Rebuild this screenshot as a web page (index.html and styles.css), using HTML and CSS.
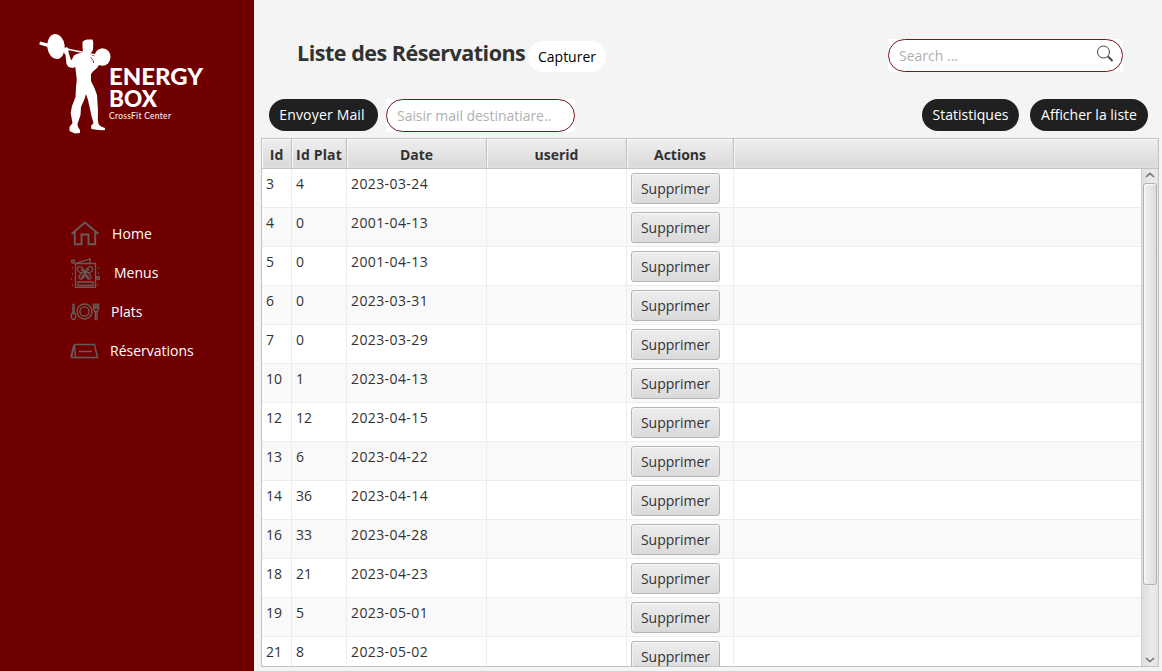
FILE: index.html
```html
<!DOCTYPE html>
<html lang="fr">
<head>
<meta charset="utf-8">
<title>Liste des Réservations</title>
<link rel="stylesheet" href="styles.css">
</head>
<body>
<aside class="sidebar">
  <svg class="logo" viewBox="30 25 190 115" width="190" height="115">
    <g fill="#fff">
      <ellipse cx="56" cy="46.500" rx="8.700" ry="12.500" transform="rotate(-6 56 46.500)"/>
      <ellipse cx="102.500" cy="57" rx="8" ry="8.800"/>
      <path d="M40 41.500L50 44L49.500 47.500L39.300 44.500Z"/>
      <path d="M62 48L98 55.500" stroke="#fff" stroke-width="1.600"/>
      <path d="M82.500 42Q84 39.500 88 39.500L92.500 39.500L93.300 42.500L93 49.500Q92 53 89.500 53.500L92 55.500L95 56L98.500 61L99 65L97 68L93.500 71L91 74L91 81L94.500 88L97 95L97.500 103L98 110L97.800 119L98.500 124L101 126.500L105 128V130Q98 130.500 91.500 129L91 126L93.500 123L91.500 116L90 109L88 100L86 94L84.500 99L81 107L80.500 115L77.500 124L78 127L80 130V133L75 133.500L69.500 131L69.500 127L72.500 123L70.700 113L72 106L75.500 97L76 87L76.800 80L75.300 67L72.500 68L68.500 67L66.500 64L65.500 55L63.500 52L63.500 48.500L67 47L68.500 49L68.500 52L70 57L71 60L74.500 55L78 53.500L83 52.500L82.500 47Z"/>
    </g>
    <path d="M71 60L73 57M90.500 57L93.500 61L93.500 63" stroke="#700000" stroke-width=".7" fill="none"/>
    <g class="logo-text">
      <text x="109" y="85" textLength="94" lengthAdjust="spacingAndGlyphs" class="logo-name">ENERGY</text>
      <text x="109" y="106.500" textLength="48" lengthAdjust="spacingAndGlyphs" class="logo-name">BOX</text>
      <text x="109" y="119" textLength="62" class="logo-sub">CrossFit Center</text>
    </g>
  </svg>
  <nav class="menu">
    <a class="item home"><svg width="30" height="30" viewBox="0 0 30 30"><path d="M1.500 15L15 3.500L28.500 15M4.800 13V25.300H11.500V15.500H18.500V25.300H25.200V13" stroke-width="1.900"/></svg><span>Home</span></a>
    <a class="item menus"><svg width="30" height="30" viewBox="0 0 30 30"><path d="M5.500 5.500H25.500V29.500H5.500ZM7 5L20 1V5M8 24H23V27.500H8Z M8 9Q12 7 15 14Q18 7 22 9Q24 14 18 15Q23 19 20 21Q17 22 15 16Q13 22 10 21Q7 19 12 15Q6 14 8 9M11 11L19 20M19 11L11 20" stroke-width="1.300"/><circle cx="3" cy="3.500" r="1.500"/><circle cx="28" cy="20" r="1.500"/><path d="M2 10h1M2 16h1M1 21h1M2 27h1M28 10h1M28 15h1M27 27h1"/></svg><span>Menus</span></a>
    <a class="item plats"><svg width="30" height="30" viewBox="0 0 30 30"><circle cx="14.500" cy="14.500" r="7.500"/><circle cx="14.500" cy="14.500" r="4.600"/><path d="M4 6.500V16M3 7V16M3.500 15.500Q1.200 16.500 1.200 19.500Q1.500 22.500 3.500 22.500Q5.700 22.500 5.700 19.500Q5.700 16.500 3.500 15.500M23.500 6.500V12.500Q24 14.500 26 14.500Q28.500 14.500 28.500 11.500V6.500M25.200 6.500V12M27 6.500V12M25.300 14.500V22.500H27V14.500"/></svg><span>Plats</span></a>
    <a class="item reserv"><svg width="30" height="30" viewBox="0 0 30 30"><path d="M4.500 8.500H24.500L27.500 21.500H1.500L4.500 8.500L5.500 21.500M1.500 21.500L1 20L4 9"/><path d="M9 15.500H22" stroke-width="1.500"/></svg><span>Réservations</span></a>
  </nav>
</aside>
<main class="content">
  <header class="title-row">
    <h1>Liste des Réservations</h1>
    <button class="pill light">Capturer</button>
    <div class="field-box search"><div class="field"><span>Search ...</span>
      <svg width="18" height="18" viewBox="0 0 18 18"><circle cx="7.500" cy="7" r="6"/><path d="M12 11.500L16.500 16" stroke-width="2"/></svg></div></div>
  </header>
  <div class="tools">
    <button class="pill dark send">Envoyer Mail</button>
    <div class="field-box mail"><div class="field"><span>Saisir mail destinatiare..</span></div></div>
    <button class="pill dark stats">Statistiques</button>
    <button class="pill dark list">Afficher la liste</button>
  </div>
  <section class="table">
    <div class="row head"><div>Id</div><div class="th-plat">Id Plat</div><div>Date</div><div>userid</div><div>Actions</div><div></div></div>
    <div class="body">
      <div class="rows" id="rows"></div>
      <div class="scrollbar">
        <svg width="10" height="6" viewBox="0 0 10 6"><path d="M1 5L5 1.300L9 5"/></svg>
        <div class="thumb"></div>
        <svg width="10" height="6" viewBox="0 0 10 6"><path d="M1 1L5 4.700L9 1"/></svg>
      </div>
    </div>
  </section>
</main>
<script src="script.js"></script>
</body>
</html>
```
FILE: styles.css
```css
* { box-sizing: border-box; }
body {
  margin: 0;
  width: 1162px;
  height: 671px;
  overflow: hidden;
  display: flex;
  background: #f4f4f4;
  font: 14px/20px "Open Sans", "Noto Sans", sans-serif;
  color: #323232;
}
.sidebar { width: 254px; height: 671px; background: #700000; flex: none; }
.logo { display: block; margin: 25px 0 0 30px; }
.logo-text { fill: #fff; font-family: Lato, sans-serif; }
.logo-name { font-size: 22px; font-weight: 900; line-height: 20px; }
.logo-sub { font-size: 8.5px; }
.menu { padding: 74px 0 0 70px; }
.item { display: flex; align-items: center; height: 39px; color: #fff; }
.item svg { fill: none; stroke: #665c5a; stroke-width: 1.4; flex: none; }
.home span { margin-left: 12px; letter-spacing: .1px; }
.menus span { margin-left: 14px; }
.plats span { margin-left: 11px; }
.reserv span { margin-left: 10px; }
.content { width: 908px; padding-left: 7px; }
.title-row { display: flex; height: 72px; padding: 39px 0 0 36px; }
h1 { margin: -1px 0 0; width: 231px; font-size: 21.5px; line-height: 29px; font-weight: 700; white-space: nowrap; letter-spacing: -.48px; }
.pill { border: 0; border-radius: 16px; height: 32px; padding: 0; font: inherit; white-space: nowrap; text-align: center; }
.light { width: 78px; height: 31px; margin-top: 2px; background: #fff; color: #000; }
.dark { background: #212020; color: #fff; }
.field-box { background: #fff; border-radius: 3px; height: 33px; }
.field { display: flex; align-items: center; justify-content: space-between; height: 33px; border: 1px solid #7c1519; border-radius: 17px; background: #fff; padding: 0 8px 0 10px; color: #b0b0b0; white-space: nowrap; }
.field svg { fill: none; stroke: #444; stroke-width: 1; margin-top: -4px; }
.search { width: 235px; margin-left: 282px; }
.tools { display: flex; padding: 27px 0 0 8px; height: 66px; }
.send { width: 109px; padding-right: 3px; letter-spacing: .18px; }
.mail { width: 189px; margin-left: 8px; }
.mail span { letter-spacing: -.04px; }
.stats { width: 97px; margin-left: 347px; }
.list { width: 118px; margin-left: 11px; }
.table { width: 898px; height: 529px; border: 1px solid #c3c3c3; background: #fff; overflow: hidden; }
.row { display: grid; grid-template-columns: 30px 55px 140px 140px 107px 1fr; }
.head { height: 30px; font-weight: 700; text-align: center; line-height: 29px; }
.head div { height: 30px; padding-top: 1px; border-right: 1px solid #c3c3c3; border-bottom: 1px solid #c3c3c3; background: linear-gradient(#efefef, #d9d9d9); box-shadow: inset 1px 1px #f7f7f7, inset -1px -1px #e0e0e0; white-space: nowrap; }
.head div:last-child { border-right: 0; }
.head .th-plat { letter-spacing: .15px; }
.body { display: flex; height: 497px; }
.rows { width: 879px; height: 497px; overflow: hidden; }
.data { height: 39px; }
.data:nth-child(even) { background: #f9f9f9; }
.data > div { border-right: 1px solid #ededed; border-bottom: 1px solid #ededed; padding: 5px 0 0 4px; white-space: nowrap; }
.data > div:last-child { border-right: 0; }
.data .act { padding-top: 4px; }
.date { letter-spacing: .4px; }
.delete { display: block; width: 89px; height: 31px; padding: 0; font: inherit; color: #323232; border: 1px solid #b5b5b5; border-radius: 3px; background: linear-gradient(#ededed, #dadada); box-shadow: inset 0 1px #f8f8f8, inset 1px 0 #f0f0f0; }
.scrollbar { width: 17px; height: 497px; border-left: 1px solid #d0d0d0; background: linear-gradient(90deg, #dedede, #ebebeb 60%, #e3e3e3); display: flex; flex-direction: column; align-items: center; padding: 3px 0 3px; }
.scrollbar svg { fill: none; stroke: #777; stroke-width: 1.7; flex: none; }
.thumb { width: 14px; height: 402px; margin: 5px 0 auto; border: 1px solid #b3b3b3; border-radius: 3px; background: linear-gradient(90deg, #f1f1f1, #dcdcdc); box-shadow: inset 1px 1px #f9f9f9; }
```
FILE: script.js
```js
const reservations = [
  [3, 4, "2023-03-24"], [4, 0, "2001-04-13"], [5, 0, "2001-04-13"],
  [6, 0, "2023-03-31"], [7, 0, "2023-03-29"], [10, 1, "2023-04-13"],
  [12, 12, "2023-04-15"], [13, 6, "2023-04-22"], [14, 36, "2023-04-14"],
  [16, 33, "2023-04-28"], [18, 21, "2023-04-23"], [19, 5, "2023-05-01"],
  [21, 8, "2023-05-02"]
];
document.getElementById("rows").innerHTML = reservations.map(([id, plat, date]) =>
  `<div class="row data"><div>${id}</div><div>${plat}</div><div class="date">${date}</div><div></div><div class="act"><button class="delete">Supprimer</button></div><div></div></div>`
).join("");
```
